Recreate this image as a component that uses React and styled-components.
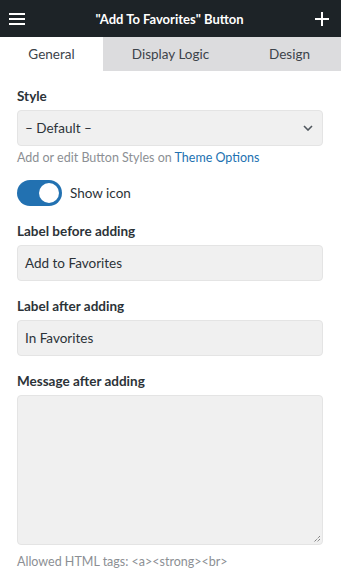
import React from "react";
import styled, { createGlobalStyle } from "styled-components";

const Global = createGlobalStyle`
  html, body {
    margin: 0;
    padding: 0;
    background: #fff;
  }
  body {
    font-family: "Segoe UI", Lato, "Noto Sans", "Liberation Sans", sans-serif;
    color: #1e1e1e;
  }
`;

const Panel = styled.div`
  width: 341px;
  height: 587px;
  overflow: hidden;
  background: #fff;
  display: flex;
  flex-direction: column;
`;

const TopBar = styled.header`
  height: 37px;
  background: #1d2327;
  display: flex;
  align-items: center;
  justify-content: space-between;
  padding: 0 11px 0 9px;
  color: #fff;
`;

const Title = styled.h1`
  margin: 0;
  font-size: 13px;
  font-weight: 700;
`;

const IconButton = styled.span`
  display: flex;
  width: 16px;
  height: 16px;
  align-items: center;
  justify-content: center;
`;

const Tabs = styled.nav`
  display: grid;
  grid-template-columns: 103px 1fr 103px;
  height: 34px;
  background: #dcdcde;
`;

const Tab = styled.div`
  display: flex;
  align-items: center;
  justify-content: center;
  font-size: 13.5px;
  color: #3c434a;
  background: ${p => (p.$active ? "#fff" : "transparent")};
`;

const Body = styled.div`
  padding: 16px 18px 0 17px;
  display: flex;
  flex-direction: column;
`;

const Label = styled.div`
  font-size: 13.5px;
  font-weight: 700;
  color: #2c3338;
  margin-bottom: 5px;
  line-height: 18px;
`;

const Field = styled.div`
  height: 36px;
  box-sizing: border-box;
  background: #f0f0f0;
  border: 1px solid #e4e4e4;
  border-radius: 4px;
  display: flex;
  align-items: center;
  justify-content: space-between;
  padding: 0 9px 0 7px;
  font-size: 13.5px;
  color: #2c3338;
  margin-bottom: ${p => p.$mb || 0}px;
`;

const TextArea = styled.div`
  position: relative;
  height: 150px;
  box-sizing: border-box;
  background: #f0f0f0;
  border: 1px solid #e4e4e4;
  border-radius: 4px;
`;

const Grip = styled.svg`
  position: absolute;
  right: 1px;
  bottom: 1px;
`;

const Help = styled.div`
  font-size: 12.5px;
  color: #8c8f94;
  margin-top: ${p => p.$mt || 4}px;
  line-height: 16px;
  a {
    color: #2271b1;
    text-decoration: none;
  }
`;

const ToggleRow = styled.div`
  display: flex;
  align-items: center;
  gap: 8px;
  margin: 14px 0 16px;
  font-size: 13.5px;
  color: #2c3338;
`;

const Switch = styled.span`
  width: 45px;
  height: 26px;
  border-radius: 13px;
  background: #2271b1;
  position: relative;
  &::after {
    content: "";
    position: absolute;
    right: 3px;
    top: 3px;
    width: 20px;
    height: 20px;
    border-radius: 50%;
    background: #fff;
  }
`;

function App() {
  return (
    <Panel>
      <Global />
      <TopBar>
        <IconButton>
          <svg width="16" height="14" viewBox="0 0 16 14">
            <rect x="0" y="1" width="16" height="2" fill="#fff" />
            <rect x="0" y="6" width="16" height="2" fill="#fff" />
            <rect x="0" y="11" width="16" height="2" fill="#fff" />
          </svg>
        </IconButton>
        <Title>"Add To Favorites" Button</Title>
        <IconButton>
          <svg width="14" height="14" viewBox="0 0 14 14">
            <rect x="6" y="0" width="2" height="14" fill="#fff" />
            <rect x="0" y="6" width="14" height="2" fill="#fff" />
          </svg>
        </IconButton>
      </TopBar>
      <Tabs>
        <Tab $active>General</Tab>
        <Tab>Display Logic</Tab>
        <Tab>Design</Tab>
      </Tabs>
      <Body>
        <Label>Style</Label>
        <Field>
          <span>– Default –</span>
          <svg width="10" height="6" viewBox="0 0 10 6">
            <path d="M1 1l4 4 4-4" fill="none" stroke="#50575e" strokeWidth="1.6" />
          </svg>
        </Field>
        <Help>
          Add or edit Button Styles on <a href="#">Theme Options</a>
        </Help>
        <ToggleRow>
          <Switch />
          Show icon
        </ToggleRow>
        <Label>Label before adding</Label>
        <Field $mb={16}>Add to Favorites</Field>
        <Label>Label after adding</Label>
        <Field $mb={16}>In Favorites</Field>
        <Label>Message after adding</Label>
        <TextArea>
          <Grip width="8" height="8" viewBox="0 0 8 8">
            <path d="M7 1L1 7M7 4L4 7" stroke="#555" strokeWidth="1" strokeDasharray="1 1" />
          </Grip>
        </TextArea>
        <Help $mt={9}>Allowed HTML tags: &lt;a&gt;&lt;strong&gt;&lt;br&gt;</Help>
      </Body>
    </Panel>
  );
}

export default App;
